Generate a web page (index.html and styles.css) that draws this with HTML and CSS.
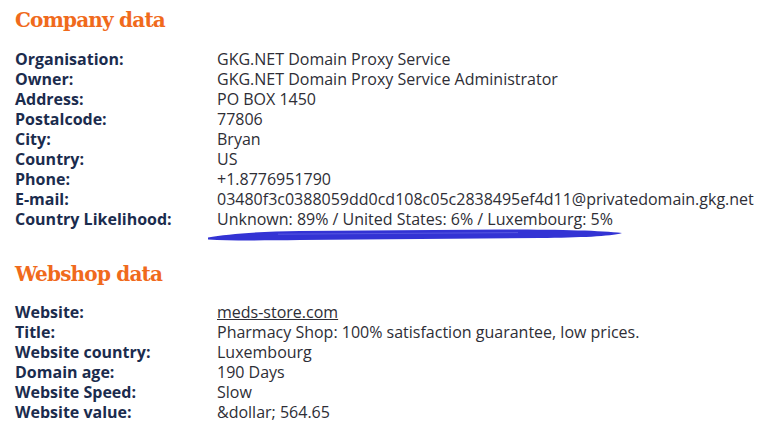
FILE: index.html
```html
<!DOCTYPE html>
<html lang="en">
<head>
<meta charset="utf-8">
<title>Company data</title>
<link rel="stylesheet" href="styles.css">
</head>
<body>
<section class="block">
  <h2 class="title">Company data</h2>
  <dl class="data">
    <dt>Organisation:</dt><dd>GKG.NET Domain Proxy Service</dd>
    <dt>Owner:</dt><dd>GKG.NET Domain Proxy Service Administrator</dd>
    <dt>Address:</dt><dd>PO BOX 1450</dd>
    <dt>Postalcode:</dt><dd>77806</dd>
    <dt>City:</dt><dd>Bryan</dd>
    <dt>Country:</dt><dd>US</dd>
    <dt>Phone:</dt><dd>+1.8776951790</dd>
    <dt>E-mail:</dt><dd>03480f3c0388059dd0cd108c05c2838495ef4d11@privatedomain.gkg.net</dd>
    <dt>Country Likelihood:</dt>
    <dd class="marked">Unknown: 89% / United States: 6% / Luxembourg: 5%
      <svg class="stroke" width="420" height="14" viewBox="0 0 420 14" aria-hidden="true">
        <path d="M0,9.5 C20,6 52,3.5 92,3 L292,1.5 C352,1.5 392,2.5 414,5 C402,8.5 372,9.5 332,10 L92,12 C52,12.5 22,12.8 0,11.5 Z" fill="#3333d4"/>
        <path d="M70,6.2 L310,4.6" stroke="#5f5fe2" stroke-width="0.8" fill="none"/>
      </svg>
    </dd>
  </dl>
</section>
<section class="block block-second">
  <h2 class="title">Webshop data</h2>
  <dl class="data">
    <dt>Website:</dt><dd><a class="link" href="#">meds-store.com</a></dd>
    <dt>Title:</dt><dd>Pharmacy Shop: 100% satisfaction guarantee, low prices.</dd>
    <dt>Website country:</dt><dd>Luxembourg</dd>
    <dt>Domain age:</dt><dd>190 Days</dd>
    <dt>Website Speed:</dt><dd>Slow</dd>
    <dt>Website value:</dt><dd>&amp;dollar; 564.65</dd>
  </dl>
</section>
</body>
</html>
```
FILE: styles.css
```css
html, body {
  margin: 0;
  padding: 0;
  background: #ffffff;
}
body {
  padding: 5px 0 0 15px;
  font-family: "Open Sans", "Noto Sans", sans-serif;
  font-size: 16px;
  line-height: 20px;
  color: #2e2e36;
}
.block-second {
  margin-top: 30px;
}
.title {
  margin: 0;
  font-family: "DejaVu Serif", "Liberation Serif", serif;
  font-weight: bold;
  font-size: 20px;
  line-height: 30px;
  color: #f06a1c;
  letter-spacing: -0.8px;
}
.data {
  display: grid;
  grid-template-columns: 202px auto;
  margin: 14px 0 0 0;
}
.block-second .data {
  margin-top: 13px;
}
.data dt {
  font-weight: bold;
  color: #1b2c4e;
}
.data dd {
  margin: 0;
}
.marked {
  position: relative;
}
.stroke {
  position: absolute;
  left: -9px;
  top: 19px;
}
.link {
  color: #2e2e36;
  text-decoration: underline;
}
```
